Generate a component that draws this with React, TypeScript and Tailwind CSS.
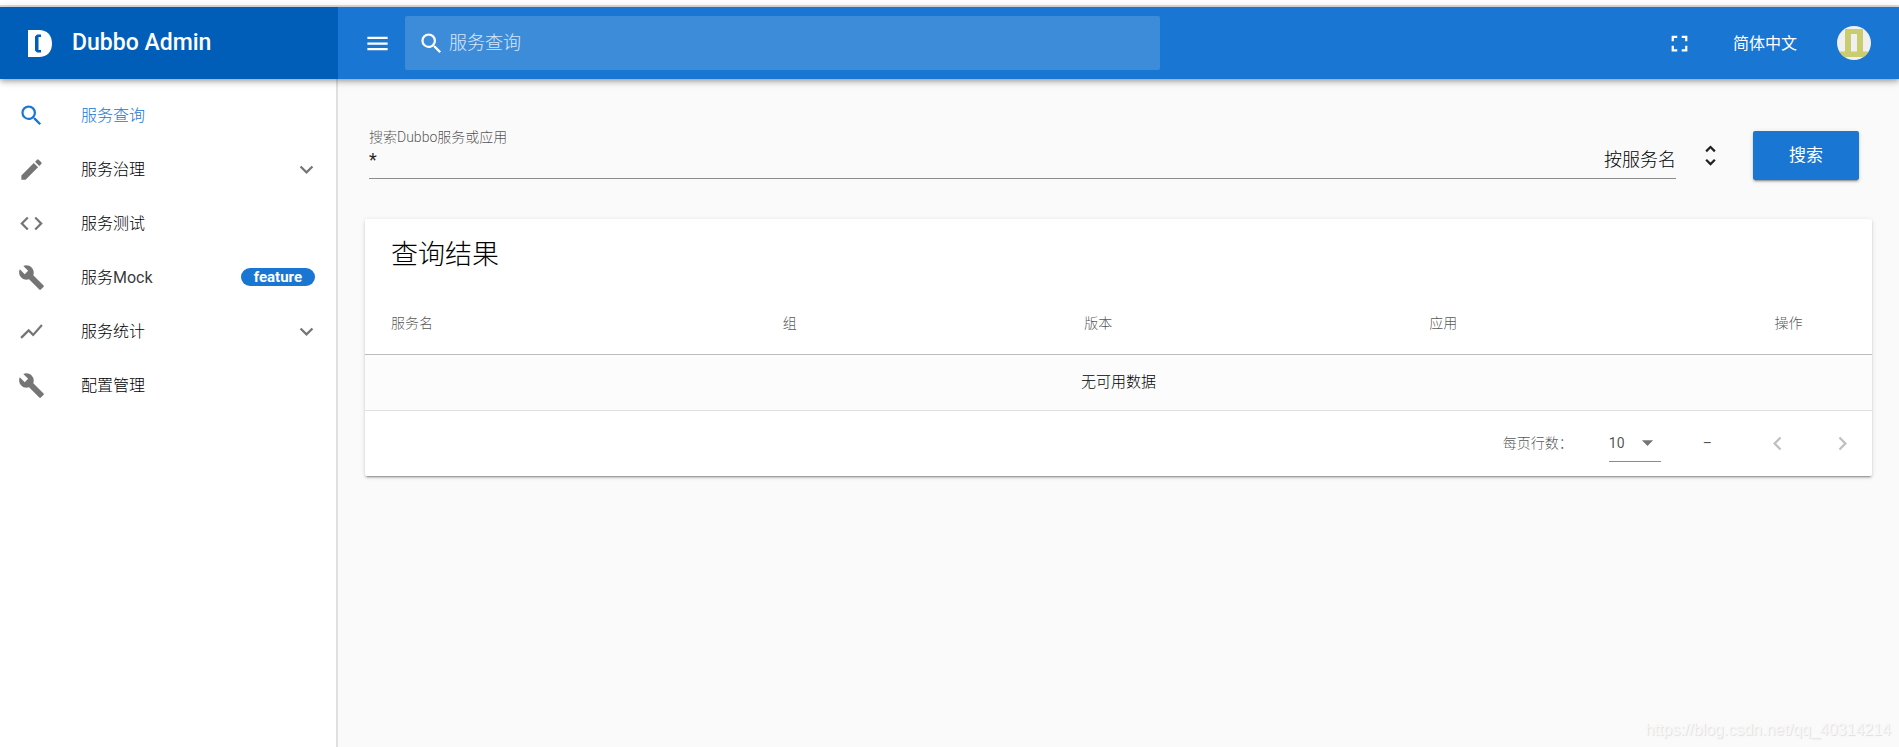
import { useState } from 'react'
import type { ReactNode } from 'react'
import type { IconType } from 'react-icons'
import {
  MdArrowDropDown,
  MdBuild,
  MdChevronLeft,
  MdChevronRight,
  MdCode,
  MdEdit,
  MdExpandMore,
  MdFullscreen,
  MdMenu,
  MdSearch,
  MdShowChart,
  MdUnfoldMore,
} from 'react-icons/md'

type MenuItem = {
  title: string
  suffix?: string
  icon: IconType
  active?: boolean
  group?: boolean
  badge?: string
}

const menu: MenuItem[] = [
  { title: '服务查询', icon: MdSearch, active: true },
  { title: '服务治理', icon: MdEdit, group: true },
  { title: '服务测试', icon: MdCode },
  { title: '服务', suffix: 'Mock', icon: MdBuild, badge: 'feature' },
  { title: '服务统计', icon: MdShowChart, group: true },
  { title: '配置管理', icon: MdBuild },
]

const headers = [
  { text: '服务名', width: 'w-[26%]' },
  { text: '组', width: 'w-[20%]' },
  { text: '版本', width: 'w-[22.9%]' },
  { text: '应用', width: 'w-[22.9%]' },
  { text: '操作', width: 'w-[8.2%]' },
]

function Logo() {
  return (
    <svg width="24" height="27" viewBox="0 0 24 27" aria-hidden="true">
      <path
        fill="#fff"
        fillRule="evenodd"
        d="M0 0h11c8 0 13 5 13 13.5S19 27 11 27H0zM13 4.500H9L7 6.500v14l2 2h4v-2.500h-2.500v-13H13z"
      />
    </svg>
  )
}

function Avatar() {
  return (
    <svg width="34" height="34" viewBox="0 0 34 34" aria-hidden="true">
      <clipPath id="avatar">
        <circle cx="17" cy="17" r="17" />
      </clipPath>
      <g clipPath="url(#avatar)">
        <rect width="34" height="34" fill="#f0f0f0" />
        <path fill="#c9cc6f" fillRule="evenodd" d="M8 3h18v22.500h8v5.500H0v-5.500h8zM14 8v17.500h6V8z" />
      </g>
    </svg>
  )
}

function IconButton({ label, disabled, children }: { label: string; disabled?: boolean; children: ReactNode }) {
  return (
    <button type="button" aria-label={label} disabled={disabled} className="shrink-0 disabled:text-black/25">
      {children}
    </button>
  )
}

function Toolbar() {
  return (
    <header className="relative z-10 flex h-[72px] bg-[#1976d2] text-white shadow-[0_2px_4px_-1px_rgba(0,0,0,0.2),0_4px_5px_0_rgba(0,0,0,0.14),0_1px_10px_0_rgba(0,0,0,0.12)]">
      <div className="flex w-[338px] shrink-0 items-center gap-5 bg-[#005eb8] pl-7 text-[23px] font-medium">
        <Logo />
        Dubbo Admin
      </div>
      <div className="flex flex-1 items-center pr-7 pl-[26px]">
        <IconButton label="菜单">
          <MdMenu size={27} />
        </IconButton>
        <label className="ml-[14px] flex h-[54px] w-[755px] items-center gap-1 rounded-xs bg-white/16 pl-[13px]">
          <MdSearch size={27} />
          <input
            type="text"
            aria-label="服务查询"
            placeholder="服务查询"
            className="min-w-0 flex-1 text-lg font-light outline-none placeholder:text-white/80"
          />
        </label>
        <div className="ml-auto flex items-center gap-10">
          <IconButton label="全屏">
            <MdFullscreen size={27} />
          </IconButton>
          <button type="button" className="pt-0.5 text-base">
            简体中文
          </button>
          <IconButton label="用户">
            <Avatar />
          </IconButton>
        </div>
      </div>
    </header>
  )
}

function Sidebar() {
  return (
    <nav className="w-[338px] shrink-0 border-r-2 border-[#e0e0e0] bg-white pt-[9px]">
      <ul>
        {menu.map(({ title, suffix, icon: Icon, active, group, badge }) => (
          <li key={title}>
            <a
              href="#"
              className={`flex h-[54px] items-center pr-4 pl-[18px] ${active ? 'text-[#1976d2]' : 'text-black'}`}
            >
              <Icon size={27} className={active ? '' : 'text-black/54'} />
              <span className="ml-9 flex-1 pt-0.5 text-base font-light">
                {title}
                {suffix && <span className="font-normal text-black/80">{suffix}</span>}
              </span>
              {badge && (
                <span className="mr-[5px] flex h-[18px] items-center rounded-full bg-[#1976d2] px-[13px] text-[15px] font-bold text-white">
                  {badge}
                </span>
              )}
              {group && <MdExpandMore size={27} className="text-black/54" />}
            </a>
          </li>
        ))}
      </ul>
    </nav>
  )
}

function SearchForm({ onSearch }: { onSearch: (value: string) => void }) {
  const [filter, setFilter] = useState('*')

  return (
    <form
      className="flex items-start pr-[13px] pl-1"
      onSubmit={(e) => {
        e.preventDefault()
        onSearch(filter)
      }}
    >
      <div className="flex-1 border-b border-[#8c8c8c]">
        <label htmlFor="filter" className="block text-sm leading-3 font-light text-black/70">
          搜索Dubbo服务或应用
        </label>
        <div className="flex h-[35px] items-center pb-0.5">
          <input
            id="filter"
            type="text"
            value={filter}
            onChange={(e) => setFilter(e.target.value)}
            className="min-w-0 flex-1 text-lg outline-none"
          />
          <span className="text-lg font-light text-black">按服务名</span>
        </div>
      </div>
      <div className="mr-[29px] ml-[21px] flex self-center">
        <IconButton label="选择查询方式">
          <MdUnfoldMore size={27} />
        </IconButton>
      </div>
      <button
        type="submit"
        className="h-[49px] w-[106px] rounded-xs bg-[#1976d2] text-[17px] text-white shadow-[0_3px_1px_-2px_rgba(0,0,0,0.2),0_2px_2px_0_rgba(0,0,0,0.14),0_1px_5px_0_rgba(0,0,0,0.12)]"
      >
        搜索
      </button>
    </form>
  )
}

function Results() {
  return (
    <section className="mt-[39px] rounded-xs bg-white shadow-[0_3px_1px_-2px_rgba(0,0,0,0.2),0_2px_2px_0_rgba(0,0,0,0.14),0_1px_5px_0_rgba(0,0,0,0.12)]">
      <h2 className="flex h-[73px] items-center px-[26px] text-[27px] font-light text-black">查询结果</h2>
      <table className="w-full table-fixed text-left">
        <thead>
          <tr className="h-[62px] border-b border-black/25">
            {headers.map((h) => (
              <th key={h.text} className={`${h.width} px-[26px] text-sm font-light text-black/70`}>
                {h.text}
              </th>
            ))}
          </tr>
        </thead>
        <tbody>
          <tr className="h-14 border-b border-black/12 bg-[#fcfcfc]">
            <td colSpan={headers.length} className="text-center text-[15px] font-light text-black">
              无可用数据
            </td>
          </tr>
        </tbody>
      </table>
      <div className="flex h-[65px] items-center justify-end pr-4 text-sm text-black/70">
        <label htmlFor="rows" className="font-light">
          每页行数：
        </label>
        <div className="relative mr-[42px] ml-9 w-[52px] border-b border-[#8c8c8c]">
          <select id="rows" defaultValue="10" className="h-9 w-full appearance-none outline-none">
            <option>5</option>
            <option>10</option>
            <option>25</option>
          </select>
          <MdArrowDropDown size={27} className="pointer-events-none absolute top-1 right-0 text-black/54" />
        </div>
        <span>–</span>
        <div className="ml-[52px] flex gap-[38px]">
          <IconButton label="上一页" disabled>
            <MdChevronLeft size={27} />
          </IconButton>
          <IconButton label="下一页" disabled>
            <MdChevronRight size={27} />
          </IconButton>
        </div>
      </div>
    </section>
  )
}

export default function App() {
  const [, setQuery] = useState('*')

  return (
    <div className="relative flex min-h-screen flex-col bg-[#fafafa] font-['Roboto','Noto_Sans_CJK_SC',sans-serif] text-black/87">
      <div className="h-[7px] border-b-2 border-[#dcdcdc] bg-white" />
      <Toolbar />
      <div className="flex flex-1">
        <Sidebar />
        <main className="min-w-0 flex-1 px-[27px] pt-[52px]">
          <SearchForm onSearch={setQuery} />
          <Results />
        </main>
      </div>
      <p className="absolute right-2 bottom-[5px] font-['Liberation_Sans',sans-serif] text-base text-[#f8f8f8] [text-shadow:1px_1px_1px_#dedede]">
        https://blog.csdn.net/qq_40314214
      </p>
    </div>
  )
}
